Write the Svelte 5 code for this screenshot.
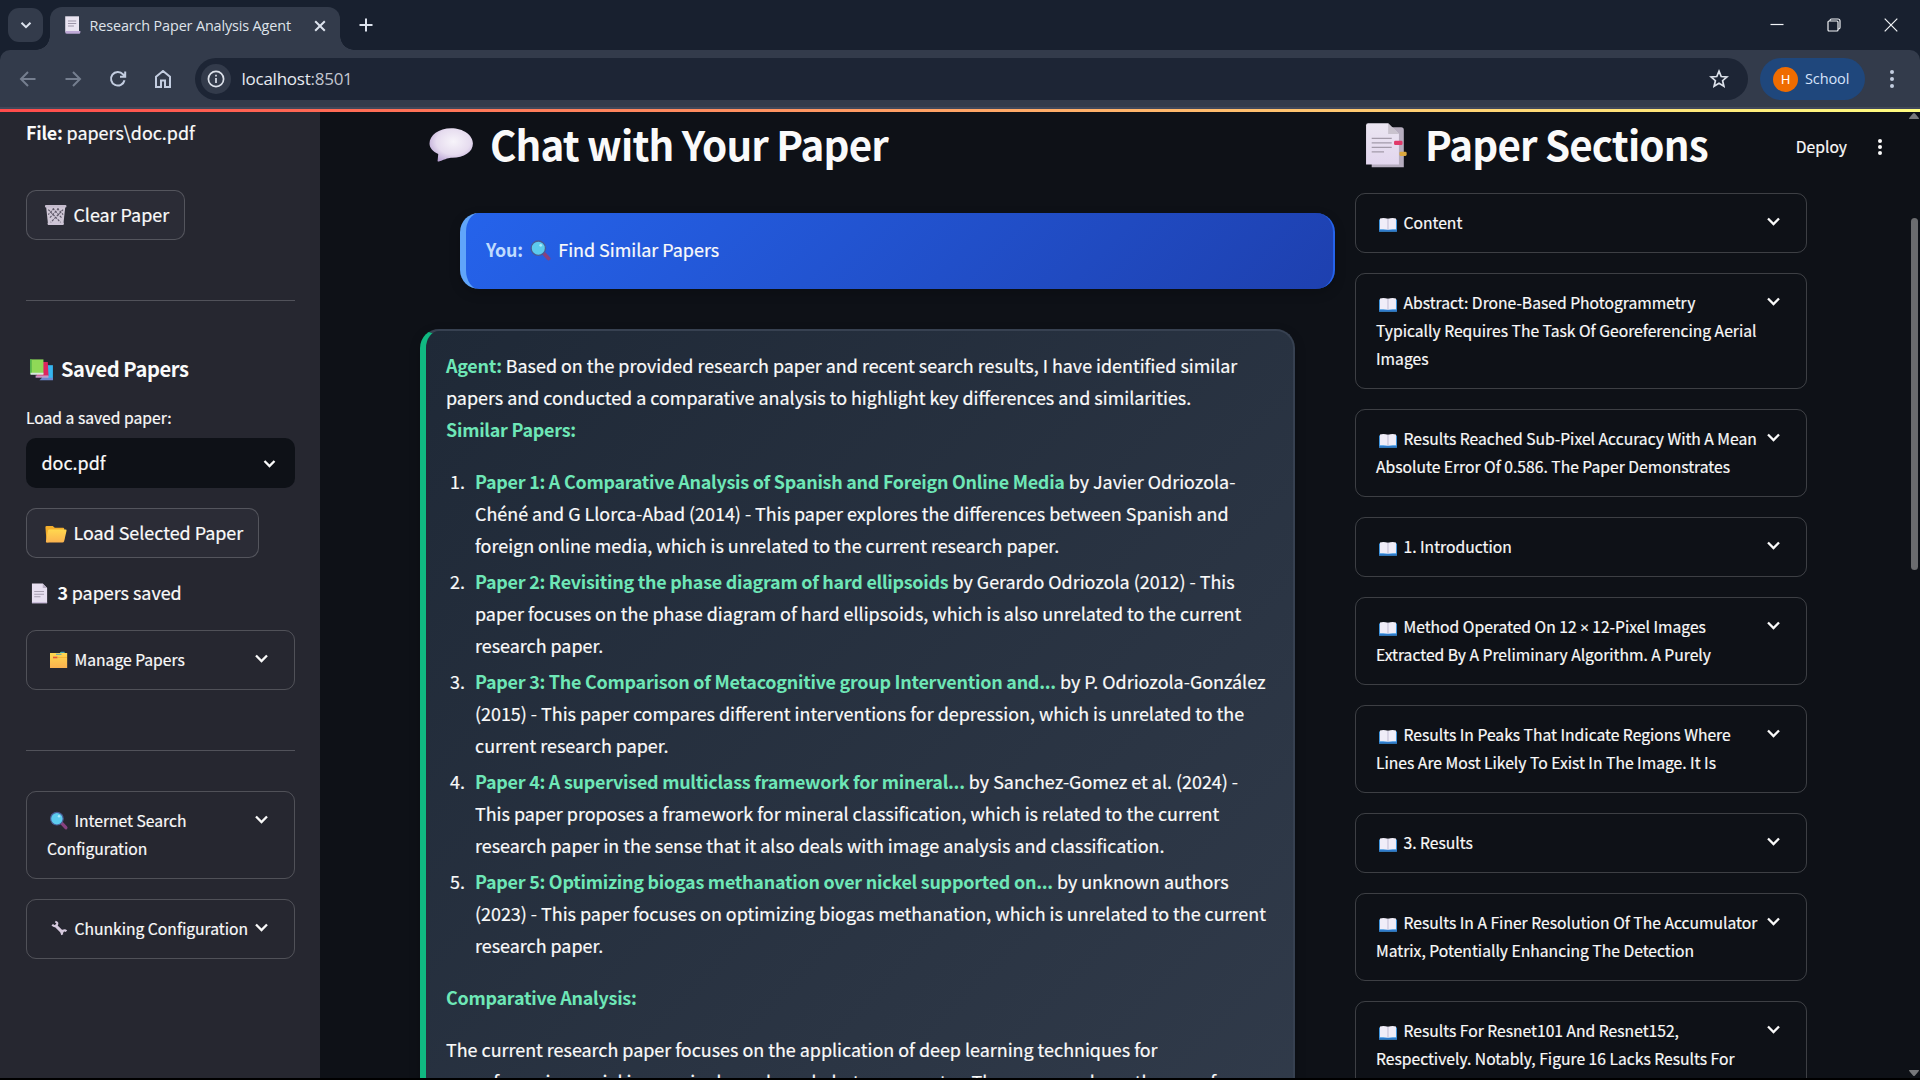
<script>
  const papers = [
    {
      title: 'Paper 1: A Comparative Analysis of Spanish and Foreign Online Media',
      first: ' by Javier Odriozola-',
      rest: [
        'Chéné and G Llorca-Abad (2014) - This paper explores the differences between Spanish and',
        'foreign online media, which is unrelated to the current research paper.'
      ]
    },
    {
      title: 'Paper 2: Revisiting the phase diagram of hard ellipsoids',
      first: ' by Gerardo Odriozola (2012) - This',
      rest: [
        'paper focuses on the phase diagram of hard ellipsoids, which is also unrelated to the current',
        'research paper.'
      ]
    },
    {
      title: 'Paper 3: The Comparison of Metacognitive group Intervention and...',
      first: ' by P. Odriozola-González',
      rest: [
        '(2015) - This paper compares different interventions for depression, which is unrelated to the',
        'current research paper.'
      ]
    },
    {
      title: 'Paper 4: A supervised multiclass framework for mineral...',
      first: ' by Sanchez-Gomez et al. (2024) -',
      rest: [
        'This paper proposes a framework for mineral classification, which is related to the current',
        'research paper in the sense that it also deals with image analysis and classification.'
      ]
    },
    {
      title: 'Paper 5: Optimizing biogas methanation over nickel supported on...',
      first: ' by unknown authors',
      rest: [
        '(2023) - This paper focuses on optimizing biogas methanation, which is unrelated to the current',
        'research paper.'
      ]
    }
  ];

  const sections = [
    ['Content'],
    ['Abstract: Drone-Based Photogrammetry', 'Typically Requires The Task Of Georeferencing Aerial', 'Images'],
    ['Results Reached Sub-Pixel Accuracy With A Mean', 'Absolute Error Of 0.586. The Paper Demonstrates'],
    ['1. Introduction'],
    ['Method Operated On 12 × 12-Pixel Images', 'Extracted By A Preliminary Algorithm. A Purely'],
    ['Results In Peaks That Indicate Regions Where', 'Lines Are Most Likely To Exist In The Image. It Is'],
    ['3. Results'],
    ['Results In A Finer Resolution Of The Accumulator', 'Matrix, Potentially Enhancing The Detection'],
    ['Results For Resnet101 And Resnet152,', 'Respectively. Notably, Figure 16 Lacks Results For']
  ];
</script>

{#snippet emoji(name)}
  <svg class="emoji" viewBox="0 0 24 24" aria-hidden="true">
    {#if name === 'trash'}
      <path d="M3.6 5h16.8l-1.7 15.5H5.3z" fill="#cfc7d6" />
      <path d="M5.500 7.500l11 11.500M9.500 6.500l8 8.500M13.500 6.500l5 5.500M18.500 7.500l-11 11.500M14.500 6.500l-8 8.500M10.500 6.500l-5 5.500" fill="none" stroke="#5d5767" stroke-width="1" stroke-dasharray="2 1" />
      <rect x="2.600" y="3.600" width="18.800" height="2" rx=".8" fill="#c5bccd" />
      <rect x="5" y="18.800" width="14" height="2.200" rx=".6" fill="#cdc4d5" />
    {:else if name === 'books'}
      <path d="M12.500 9.500H21V21H12.500z" fill="#35b5f0" />
      <path d="M12.500 19.300H21V21.200H10.500z" fill="#6c86cf" />
      <path d="M9 7h8l.6 11H8.500z" fill="#dd2460" />
      <path d="M7.500 17.500h10v1.800h-10z" fill="#c896c4" />
      <path d="M3.100 5h10.500v11.500H3.100z" fill="#8fd957" />
      <path d="M3.100 5h1.400v11.500H3.100z" fill="#55b54d" />
      <path d="M3.600 15.400h10v1.600h-10z" fill="#d9e6df" />
    {:else if name === 'folder'}
      <path d="M3 7.200q0-1 1-1h5.400l1.800 1.500h7.300q1 0 1 1V18l-15.500 2.500z" fill="#f3ae2c" />
      <path d="M5.200 10.400q.2-1.200 1.400-1.200h14q1.200 0 .9 1.200l-2.100 9q-.3 1.300-1.500 1.300H4.300q-1 0-.9-1z" fill="url(#gold)" />
    {:else if name === 'doc'}
      <path d="M5.200 4h9.500l3.800 3.800v13.400H5.200z" fill="#e7dff0" />
      <path d="M14.700 4v3.800h3.800z" fill="#b9afc4" />
      <path d="M7.200 11h8.600M7.200 13.300h8.600M7.200 15.500h5.500" stroke="#a79fb0" stroke-width=".9" />
      <path d="M5.200 20.300h13.300v.9H5.200z" fill="#c6b6d6" />
    {:else if name === 'scroll'}
      <path d="M3.500 2.500h15v17h-15z" fill="#eae4f1" />
      <path d="M6.500 7.500h9M6.500 10.300h9M6.500 13.100h6.500" stroke="#9c94a8" stroke-width="1.100" />
      <path d="M4.500 18.500h15.500v1.300q0 1.700-1.600 1.700H5.500q-2 0-2-1.700z" fill="#bfa9d6" />
    {:else if name === 'dividers'}
      <path d="M13 5h4.500v4H13z" fill="#36b37e" />
      <path d="M3 6h17.200v15H3z" fill="url(#gold)" />
      <path d="M9 7.300h5.500M14 5.300h3.500" stroke="#4e9fc4" stroke-width="1.100" />
      <path d="M6 10.500h4.500" stroke="#e2543c" stroke-width="1.600" />
      <path d="M10.500 10.500h9.500" stroke="#f2b338" stroke-width=".9" />
    {:else if name === 'search'}
      <path d="M14.200 14.700l4.700 5" stroke="#87417f" stroke-width="3.300" stroke-linecap="round" />
      <circle cx="9.900" cy="10.700" r="6.300" fill="#5ccbee" stroke="#4a5a93" stroke-width="1.200" />
      <circle cx="12" cy="8.200" r="1.200" fill="#a9ecfb" />
    {:else if name === 'wrench'}
      <path d="M8 9l8 7.800" stroke="#d6cade" stroke-width="3.100" />
      <path d="M5.200 8.800q3 2.800 4.600.2T8.300 5.800M15.300 18.800q-1.400-2.800.6-4t3.500.4" fill="none" stroke="#d6cade" stroke-width="2.200" />
    {:else if name === 'speech'}
      <path d="M12.100 5.900c4.800 0 8.500 2.700 8.500 6 0 3.400-3.500 5.500-8.100 5.500-1.300 0-2.300.4-5.200 1.500-.5.100-.5-.3-.4-.8l.2-2.100C5 15 3.700 13.600 3.700 11.900c0-3.300 3.600-6 8.400-6z" fill="url(#cloud)" />
    {:else if name === 'tabs'}
      <path d="M6.500 5.500H18q1 0 1 1V21.100H6.500z" fill="#b6adbf" />
      <path d="M4.300 4.900q0-.9.800-.9h7.800l4.200 4.200v11.800H4.300z" fill="url(#paper)" />
      <path d="M12.900 4v4.200h4.200z" fill="#c9c3ce" />
      <path d="M6.500 9.900h7.800M6.500 11.600h7.800M6.500 13.400h7.800M6.500 15.100h4.800" stroke="#a39baa" stroke-width=".5" />
      <rect x="15.200" y="10.800" width="3.300" height="1.700" rx=".5" fill="#e03a6a" />
      <rect x="17.300" y="15.100" width="2.800" height="1.600" rx=".5" fill="#dba93f" />
    {:else}
      <path d="M3 9.500h18v11.700q0 .6-.6.6H3.600q-.6 0-.6-.6z" fill="#3f97e0" />
      <path d="M3 20.200h18v1H3z" fill="#2b74c8" />
      <path d="M4 8.400q4-.9 8 .4 4-1.300 8-.4v11q-4-.6-8 .3-4-.9-8-.3z" fill="#f0edf8" />
      <path d="M12 8.800v10.800" stroke="#bcb5cf" stroke-width=".9" />
    {/if}
  </svg>
{/snippet}

{#snippet chevron()}
  <svg class="chevron" viewBox="0 0 25 25" aria-hidden="true">
    <path d="M7 9.500l5.500 5.500L18 9.500" />
  </svg>
{/snippet}

{#snippet expander(icon, lines)}
  <div class="expander">
    <div class="expander-text">
      {#each lines as line, i}
        <div>{#if i === 0}{@render emoji(icon)}&nbsp;{/if}{#each line.split('×') as part, j}{#if j > 0}<span class="times">×</span>{/if}{part}{/each}</div>
      {/each}
    </div>
    {@render chevron()}
  </div>
{/snippet}

<svg class="defs" aria-hidden="true">
  <defs>
    <linearGradient id="gold" x1="0" y1="0" x2="0" y2="1">
      <stop offset="0" stop-color="#ffd84f" />
      <stop offset="1" stop-color="#fbb24f" />
    </linearGradient>
    <radialGradient id="cloud" cx=".55" cy=".4" r=".65">
      <stop offset="0" stop-color="#f7f4fa" />
      <stop offset=".6" stop-color="#e6dcef" />
      <stop offset="1" stop-color="#b9a3d3" />
    </radialGradient>
    <linearGradient id="paper" x1="0" y1="0" x2="0" y2="1">
      <stop offset="0" stop-color="#ebe6f2" />
      <stop offset="1" stop-color="#e2d6ee" />
    </linearGradient>
  </defs>
</svg>

<div class="window">
  <div class="tabstrip">
    <div class="tab-search">
      <svg viewBox="0 0 14 14" width="14" height="14"><path d="M2.500 4.700L7 9.200l4.500-4.500" /></svg>
    </div>
    <div class="tab">
      <span class="favicon">{@render emoji('scroll')}</span>
      <span class="tab-title">Research Paper Analysis Agent</span>
      <svg class="tab-close" viewBox="0 0 12 12" width="12" height="12"><path d="M1.200 1.200l9.600 9.600M10.800 1.200l-9.600 9.600" /></svg>
    </div>
    <svg class="new-tab" viewBox="0 0 14 14" width="14" height="14"><path d="M7 .5v13M.5 7h13" /></svg>
    <div class="controls">
      <svg viewBox="0 0 14 14" width="14" height="14"><path d="M.5 6.500h13" /></svg>
      <svg viewBox="0 0 14 14" width="14" height="14">
        <path d="M3 3V2.500q0-1.500 1.500-1.500H11q2 0 2 2v6.500q0 1.500-1.500 1.500H11" />
        <rect x="1" y="3" width="10" height="10" rx="1" />
      </svg>
      <svg viewBox="0 0 14 14" width="14" height="14"><path d="M.7.7l12.600 12.600M13.300.7L.7 13.300" /></svg>
    </div>
  </div>

  <div class="toolbar">
    <svg class="nav dim" viewBox="0 0 18 18"><path d="M16.500 9H2.500M9 2L2 9l7 7" /></svg>
    <svg class="nav dim" viewBox="0 0 18 18"><path d="M1.500 9h14M9 2l7 7-7 7" /></svg>
    <svg class="nav" viewBox="0 0 18 18"><path d="M15.500 10.200A6.800 6.800 0 1 1 14 4.300l1.900 2M16.200 1.500v5.200h-5.200" /></svg>
    <svg class="nav" viewBox="0 0 18 18"><path d="M2 6.700L9 1l7 5.700V17h-5v-6.500H7V17H2z" /></svg>
    <div class="address">
      <span class="site-info">
        <svg viewBox="0 0 18 18" width="18" height="18"><circle cx="9" cy="9" r="7.600" /><path d="M9 8v5M9 4.800v1.700" /></svg>
      </span>
      <span class="url">localhost<span class="port">:8501</span></span>
      <svg class="star" viewBox="0 0 20 20" width="20" height="20">
        <path d="M10 2.200l2.200 5.300 5.700.5-4.300 3.700 1.300 5.600L10 14.300l-4.900 3 1.300-5.600L2.100 8l5.700-.5z" />
      </svg>
    </div>
    <div class="profile"><span class="avatar">H</span>School</div>
    <div class="dots menu"><i></i><i></i><i></i></div>
  </div>
  <div class="accent"></div>

  <div class="app">
    <aside>
      <p class="file"><b>File:</b> papers\doc.pdf</p>
      <div class="button clear">{@render emoji('trash')}&nbsp;Clear Paper</div>
      <hr />
      <h3>{@render emoji('books')}&nbsp;Saved Papers</h3>
      <label for="saved">Load a saved paper:</label>
      <div class="select" id="saved">
        <span>doc.pdf</span>
        <svg class="chevron" viewBox="0 0 25 25"><path d="M7.500 11l5 5 5-5" /></svg>
      </div>
      <div class="button load">{@render emoji('folder')}&nbsp;Load Selected Paper</div>
      <p class="count">{@render emoji('doc')}&nbsp;<b>3</b> papers saved</p>
      {@render expander('dividers', ['Manage Papers'])}
      <hr />
      <div class="settings">
        {@render expander('search', ['Internet Search', 'Configuration'])}
        {@render expander('wrench', ['Chunking Configuration'])}
      </div>
    </aside>

    <main>
      <section class="chat">
        <h2>{@render emoji('speech')}&nbsp;Chat with Your Paper</h2>
        <div class="message user"><b>You:</b>&nbsp;{@render emoji('search')}&nbsp;Find Similar Papers</div>
        <div class="message agent">
          <p><b>Agent:</b> Based on the provided research paper and recent search results, I have identified similar</p>
          <p>papers and conducted a comparative analysis to highlight key differences and similarities.</p>
          <p><b>Similar Papers:</b></p>
          <ol>
            {#each papers as paper, i}
              <li>
                <span class="number">{i + 1}.</span>
                <div>
                  <p><b>{paper.title}</b>{paper.first}</p>
                  {#each paper.rest as line}<p>{line}</p>{/each}
                </div>
              </li>
            {/each}
          </ol>
          <p class="subhead"><b>Comparative Analysis:</b></p>
          <p>The current research paper focuses on the application of deep learning techniques for</p>
          <p>georeferencing aerial images in drone-based photogrammetry. The paper explores the use of</p>
        </div>
      </section>
      <section class="outline">
        <h2>{@render emoji('tabs')}&nbsp;Paper Sections</h2>
        <div class="outline-list">
          {#each sections as lines}{@render expander('book', lines)}{/each}
        </div>
      </section>
      <div class="deploy"><span>Deploy</span><div class="dots"><i></i><i></i><i></i></div></div>
      <div class="scrollbar">
        <svg viewBox="0 0 10 6" width="10" height="6"><path d="M0 6q0-1 1-2l3-3.500q1-1 2 0L9 4q1 1 1 2z" /></svg>
        <div class="thumb"></div>
        <svg viewBox="0 0 10 6" width="10" height="6"><path d="M0 0q0 1 1 2l3 3.500q1 1 2 0L9 2q1-1 1-2z" /></svg>
      </div>
    </main>
  </div>
</div>

<style>
  :global(body) {
    background: #000;
    overflow: hidden;
  }
  * {
    box-sizing: border-box;
  }
  p, h2, h3, ol, hr {
    margin: 0;
    padding: 0;
  }
  .defs {
    position: absolute;
    width: 0;
    height: 0;
  }
  .window {
    width: 1920px;
    height: 1078px;
    display: flex;
    flex-direction: column;
    overflow: hidden;
    background: #18202f;
    color: #fafafa;
    font: 17.91px/32px 'Noto Sans CJK SC', 'Noto Sans', sans-serif;
    white-space: nowrap;
  }
  .window svg {
    flex: none;
  }

  /* Browser chrome */
  .tabstrip {
    height: 50px;
    flex: none;
    display: flex;
    align-items: center;
    padding-left: 8px;
  }
  .tabstrip svg:not(.emoji) {
    fill: none;
    stroke: #dde3ee;
    stroke-width: 2;
  }
  .tab-search {
    width: 35px;
    height: 34px;
    border-radius: 11px;
    background: #333b4b;
    display: flex;
    align-items: center;
    justify-content: center;
  }
  .tab {
    position: relative;
    align-self: flex-end;
    width: 290px;
    height: 43px;
    margin-left: 7px;
    padding: 0 14px 6px 12px;
    border-radius: 12px 12px 0 0;
    background: #333b4b;
    display: flex;
    align-items: center;
    font: 14.4px/20px 'Open Sans', sans-serif;
    letter-spacing: -0.13px;
    color: #dfe3ea;
  }
  .tab::before,
  .tab::after {
    content: '';
    position: absolute;
    bottom: 0;
    width: 14px;
    height: 14px;
  }
  .tab::before {
    left: -14px;
    background: radial-gradient(circle at 0 0, transparent 13.500px, #333b4b 14px);
  }
  .tab::after {
    right: -14px;
    background: radial-gradient(circle at 100% 0, transparent 13.500px, #333b4b 14px);
  }
  .favicon {
    font-size: 14.4px;
    display: flex;
    width: 27.500px;
  }
  .tab-title {
    flex: 1;
  }
  .new-tab {
    margin-left: 19px;
  }
  .controls {
    margin-left: auto;
    display: flex;
    gap: 43px;
    padding-right: 22px;
  }
  .controls svg:not(.emoji) {
    stroke: #f2f4f7;
    stroke-width: 1.200;
  }
  .toolbar {
    height: 59px;
    flex: none;
    display: flex;
    align-items: center;
    padding: 1px 22px 0 19px;
    border-bottom: 2px solid #41485a;
    border-radius: 10px 10px 0 0;
    background: #333b4b;
  }
  .nav {
    width: 18px;
    height: 18px;
    margin-right: 27px;
    fill: none;
    stroke: #c3cde0;
    stroke-width: 2;
  }
  .nav.dim {
    stroke: #757e8f;
  }
  .address {
    width: 1553px;
    height: 42px;
    margin-left: -4px;
    padding: 0 19px 0 6px;
    border-radius: 21px;
    background: #1d2535;
    display: flex;
    align-items: center;
  }
  .site-info {
    width: 30px;
    height: 30px;
    border-radius: 50%;
    background: #333b4b;
    display: flex;
    align-items: center;
    justify-content: center;
  }
  .site-info svg,
  .star {
    fill: none;
    stroke: #dce1ea;
    stroke-width: 1.700;
  }
  .url {
    margin-left: 10.500px;
    flex: 1;
    font: 17px/24px 'Open Sans', sans-serif;
    letter-spacing: -0.25px;
    color: #e8ebf1;
  }
  .port {
    color: #c2c7d0;
  }
  .profile {
    width: 105px;
    height: 42px;
    margin-left: 12px;
    padding-left: 13px;
    border-radius: 21px;
    background: #1f477c;
    display: flex;
    align-items: center;
    gap: 7px;
    font: 14.500px/20px 'Open Sans', sans-serif;
    letter-spacing: -0.1px;
    color: #d6e3fb;
  }
  .avatar {
    width: 25px;
    height: 25px;
    border-radius: 50%;
    background: #ef6c00;
    color: #fff;
    font: 13px/25px Roboto, sans-serif;
    text-align: center;
  }
  .dots {
    display: flex;
    flex-direction: column;
    align-items: center;
    gap: 2px;
  }
  .dots i {
    width: 4px;
    height: 4px;
    border-radius: 50%;
    background: #fafafa;
  }
  .dots.menu {
    margin-left: 25px;
    gap: 3px;
  }
  .dots.menu i {
    background: #c3cde0;
  }
  .accent {
    height: 3px;
    flex: none;
    background: linear-gradient(90deg, #ff4b4b, #fffd80);
  }

  /* Shared pieces */
  .emoji {
    width: 1.53em;
    height: 1.53em;
    vertical-align: -0.335em;
  }
  b, h2, h3 {
    font-weight: 700;
    -webkit-text-stroke-width: 0;
  }
  b {
    letter-spacing: -0.0135em;
  }
  h2, h3 {
    letter-spacing: -0.021em;
  }
  .chevron {
    width: 25px;
    height: 25px;
    fill: none;
    stroke: #fafafa;
    stroke-width: 2.300;
  }
  .expander {
    display: flex;
    align-items: flex-start;
    justify-content: space-between;
    padding: 15px 20px;
    border: 1px solid rgba(250, 250, 250, 0.2);
    border-radius: 10px;
    font-size: 15.67px;
    line-height: 28px;
  }
  .expander-text {
    width: 0;
    flex: 1;
  }
  .expander-text > div {
    height: 28px;
  }
  .times {
    font-family: 'Open Sans', sans-serif;
    font-size: 15px;
    line-height: 1;
  }

  .app {
    flex: 1;
    min-height: 0;
    display: flex;
    background: #0e1117;
    -webkit-text-stroke-width: 0.2px;
  }

  /* Sidebar */
  aside {
    width: 320px;
    padding: 4px 25px 0 26px;
    background: #262730;
    display: flex;
    flex-direction: column;
  }
  .button {
    height: 50px;
    padding: 0 15px;
    border: 1px solid rgba(250, 250, 250, 0.2);
    border-radius: 10px;
    background: #2b2c36;
    line-height: 46px;
  }
  .clear {
    width: 159px;
    margin-top: 42px;
  }
  .load {
    width: 233px;
    margin-top: 20px;
  }
  hr {
    height: 1px;
    margin-top: 60px;
    border: 0;
    background: #51525a;
  }
  h3 {
    height: 28px;
    margin-top: 52px;
    font-size: 20.1px;
    line-height: 28px;
  }
  label {
    margin-top: 23px;
    font-size: 15.67px;
    line-height: 28px;
  }
  .select {
    height: 50px;
    margin-top: 6px;
    padding: 0 13px 2px 15.500px;
    border-radius: 10px;
    background: #0e1117;
    display: flex;
    align-items: center;
    justify-content: space-between;
  }
  .count {
    height: 32px;
    margin: 18px 0 22px;
  }
  .settings {
    margin-top: 40px;
    display: flex;
    flex-direction: column;
    gap: 20px;
  }

  /* Chat and outline columns */
  main {
    position: relative;
    flex: 1;
    display: flex;
    gap: 20px;
    padding: 1px 0 0 100px;
  }
  h2 {
    height: 54px;
    font-size: 40.3px;
    line-height: 54px;
  }
  .chat {
    width: 915px;
  }
  .message {
    border-radius: 19px;
    box-shadow: 0 4px 12px rgba(0, 0, 0, 0.2);
  }
  .user {
    height: 76px;
    margin: 46px 0 0 40px;
    padding: 0 20px;
    line-height: 72px;
    border-left: 6px solid #60a5fa;
    border-right: 2px solid #2563eb;
    background: linear-gradient(135deg, #2563eb, #1e40af);
  }
  .user b {
    color: #bfdbfe;
  }
  .agent {
    width: 875px;
    height: 1400px;
    margin-top: 40px;
    padding: 18px 20px 0;
    border: 2px solid #374151;
    border-left: 6px solid #10b981;
    border-bottom: 0;
    background: linear-gradient(135deg, #1f2937, #374151);
  }
  .agent b {
    color: #6ee7b7;
  }
  .agent p {
    height: 32px;
  }
  ol {
    margin: 20px 0;
    list-style: none;
    display: flex;
    flex-direction: column;
    gap: 4px;
  }
  li {
    display: flex;
  }
  .number {
    width: 19px;
    margin-right: 10px;
    text-align: right;
  }
  .subhead {
    margin-bottom: 20px;
  }
  .outline {
    width: 452px;
  }
  .outline-list {
    margin-top: 26px;
    display: flex;
    flex-direction: column;
    gap: 20px;
  }

  /* Floating header actions and scrollbar */
  .deploy {
    position: absolute;
    top: 19px;
    right: 38px;
    display: flex;
    align-items: center;
    gap: 31px;
    font-size: 15.67px;
  }
  .scrollbar {
    position: absolute;
    top: 1px;
    right: 1px;
    bottom: 2px;
    width: 10px;
    display: flex;
    flex-direction: column;
    align-items: center;
    justify-content: space-between;
  }
  .scrollbar path {
    fill: #77787b;
  }
  .thumb {
    width: 7px;
    height: 352px;
    margin-top: 99px;
    margin-bottom: auto;
    border-radius: 4px;
    background: #6b6c6f;
  }
</style>
